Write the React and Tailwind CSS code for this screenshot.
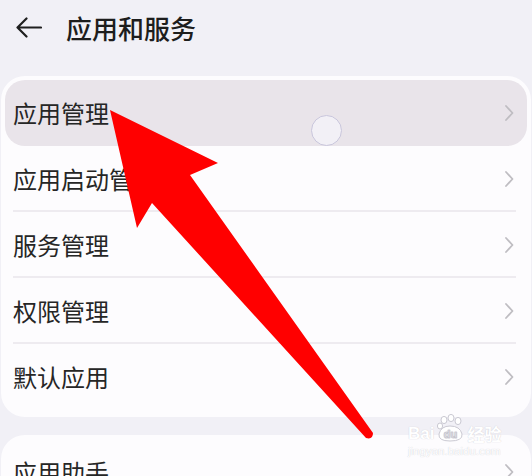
const rows = ['应用管理', '应用启动管理', '服务管理', '权限管理', '默认应用'];

const Chevron = () => (
    <svg width="10" height="18" viewBox="0 0 10 18" fill="none" stroke="#bfbdc2" strokeWidth="1.8" strokeLinecap="round" strokeLinejoin="round">
        <path d="M2 2 L8.5 9 L2 16" />
    </svg>
);

const Row = ({ label, pressed, divider }) => (
    <div className={`relative h-[66px] flex items-center pl-[8px] pr-[13px] ${pressed ? 'bg-[#e9e4ea] rounded-[20px]' : ''}`}>
        <span className="flex-1 text-[24px] text-[#262626] leading-none">{label}</span>
        <Chevron />
        {divider && <div className="absolute left-[8px] right-[11px] bottom-0 h-[2px] bg-[#eeebf0]" />}
    </div>
);

const Watermark = () => (
    <div className="absolute left-[408px] top-[414px] flex flex-col items-start text-white [text-shadow:0_0_1px_#c4c3cc]">
        <div className="flex items-end">
            <span className="font-['Liberation_Sans',sans-serif] font-bold text-[17px] leading-none mb-[1px]">Bai</span>
            <svg width="31" height="29" viewBox="0 0 31 29" className="mx-[1px]">
                <g fill="#fff" stroke="#cac9d2" strokeWidth="1">
                    <ellipse cx="9" cy="6" rx="3" ry="3.6" />
                    <ellipse cx="16" cy="4" rx="3" ry="3.6" />
                    <ellipse cx="23" cy="7" rx="3" ry="3.6" />
                    <ellipse cx="5" cy="12" rx="2.6" ry="3" />
                    <path d="M4 20 Q6 12 15 12 Q25 12 27 20 Q28 27 15 27 Q3 27 4 20 Z" />
                </g>
                <text x="15.5" y="24" textAnchor="middle" fontSize="11" fontWeight="700" fontFamily="Liberation Sans, sans-serif" fill="#fff" stroke="#c4c3cc" strokeWidth="0.6">du</text>
            </svg>
            <span className="font-['Noto_Sans_CJK_SC',sans-serif] font-bold text-[17px] leading-none mb-[1px]">经验</span>
        </div>
        <span className="font-['Liberation_Sans',sans-serif] text-[11.5px] leading-none mt-[3px]">jingyan.baidu.com</span>
    </div>
);

export default function App() {
    return (
        <div className="relative w-[532px] h-[476px] overflow-hidden bg-[#f1f0f6] font-['Noto_Sans_CJK_SC',sans-serif]">
            <div className="h-[55px] flex items-center pl-[16px]">
                <svg width="26" height="21" viewBox="0 0 26 21" fill="none" stroke="#1f1f1f" strokeWidth="2.2" strokeLinecap="round" strokeLinejoin="round">
                    <path d="M25 10.5 H1.5 M10.5 1.5 L1.5 10.5 L10.5 19.5" />
                </svg>
                <h1 className="ml-[24px] text-[26px] text-[#1d1d1d] font-medium leading-none">应用和服务</h1>
            </div>

            <div className="mt-[21px] mx-[1px] bg-[#fdfcfe] rounded-[24px] p-[4px] pb-[7px]">
                {rows.map((r, i) => (
                    <Row key={r} label={r} pressed={i === 0} divider={i > 0 && i < rows.length - 1} />
                ))}
            </div>

            <div className="mt-[18px] mx-[1px] bg-[#fdfcfe] rounded-[24px] p-[4px]">
                <Row label="应用助手" />
            </div>

            {/* touch indicator */}
            <div className="absolute left-[311px] top-[115px] w-[31px] h-[31px] rounded-full bg-[#f2f0f6] border-[1.5px] border-[#c9c6dc]" />

            {/* annotation arrow */}
            <svg className="absolute left-0 top-0" width="532" height="476" viewBox="0 0 532 476">
                <path d="M110 110 L218 163 L190 175 L373 433 Q373 440 366 438 L152 203 L137 228 Z" fill="#ff0000" />
            </svg>

            <Watermark />
        </div>
    );
}
